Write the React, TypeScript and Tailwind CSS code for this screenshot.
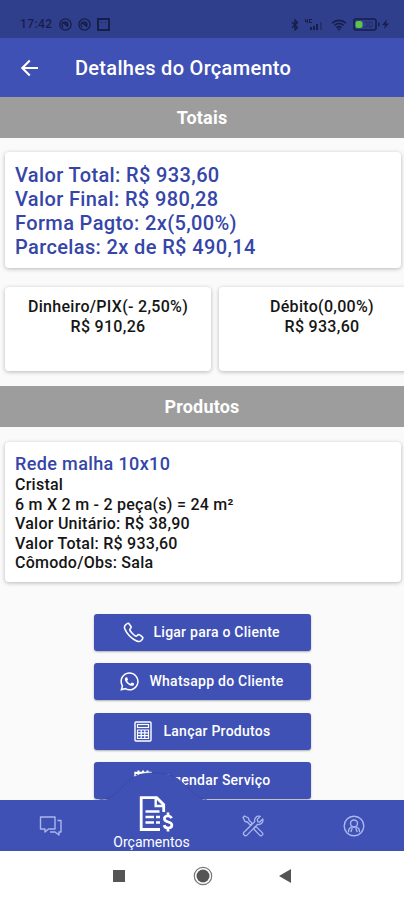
import React from 'react';
import { FaWhatsapp } from 'react-icons/fa';

interface ActionButtonProps {
  label: string;
  icon: React.ReactNode;
  className: string;
}

const summary = [
  'Valor Total: R$ 933,60',
  'Valor Final: R$ 980,28',
  'Forma Pagto: 2x(5,00%)',
  'Parcelas: 2x de R$ 490,14',
];

const productLines = [
  'Cristal',
  '6 m X 2 m - 2 peça(s) = 24 m²',
  'Valor Unitário: R$ 38,90',
  'Valor Total: R$ 933,60',
  'Cômodo/Obs: Sala',
];

const PhoneIcon = () => (
  <svg className="w-[21px] h-[21px]" viewBox="0 0 24 24" fill="none" stroke="currentColor" strokeWidth={1.8} strokeLinejoin="round">
    <path d="M3.2 3.1C4.4 1.8 5.2 1.2 6.1 1.4c.7.2 3.1 3.5 3.3 4.3.3 1.1-1.9 2.3-1.7 3.2.4 1.8 5.3 6.9 7.2 7.3 1 .2 2-2 3.2-1.9.9.1 4.4 2.7 4.6 3.6.2 1-1.5 3.1-2.7 3.9-1 .6-2.7.5-4.5-.2C10 19.4 4.2 13.5 2.1 8.1c-.8-2.1-.5-3.8 1.1-5z" />
  </svg>
);

const CalculatorIcon = () => (
  <svg className="w-[18px] h-[21px]" viewBox="0 0 18 21" fill="none" stroke="currentColor">
    <rect x="1" y="1" width="16" height="19" rx="1" strokeWidth={1.4} />
    <rect x="3.5" y="3.5" width="11" height="3" strokeWidth={1.2} />
    <path d="M3.5 9h11v8.5h-11zM3.5 11.8h11M3.5 14.6h11M7.2 9v8.5M10.8 9v8.5" strokeWidth={1.2} />
  </svg>
);

const CalendarIcon = () => (
  <svg className="w-[18px] h-[21px]" viewBox="0 0 18 21" fill="none" stroke="currentColor" strokeWidth={1.4}>
    <path d="M1 2.5h16V19H1zM1 6h16" />
    <path d="M1 3h16M4.5 .5v5M9 .5v5M13.5 .5v5" strokeWidth={2} />
  </svg>
);

const ChatIcon = () => (
  <svg className="w-[24px] h-[20px]" viewBox="0 0 24 20" fill="none" stroke="currentColor" strokeWidth={1.4} strokeLinejoin="round">
    <path d="M1.5 1h14.5v12H9.500L6 16v-3H1.5z" />
    <path d="M18.5 4.5h3.5V16h-2v3l-4-3h-5" />
  </svg>
);

const BudgetIcon = () => (
  <svg className="w-[36px] h-[36px]" viewBox="0 0 36 36" fill="none" stroke="currentColor">
    <path d="M22 33.5H3.200V1.700h15.500l7 7V16" strokeWidth={2.8} />
    <path d="M17.7 2v8h8" strokeWidth={2.4} />
    <path d="M7.5 15.5h14M7.5 21h8.500M18 21h4M7.5 26.5h8.500M18 26.5h4" strokeWidth={2.5} />
    <path d="M33.5 22.2c-.6-1.6-1.9-2.2-3.600-2.2-2 0-3.500 1-3.500 2.800 0 4.100 7.500 2.200 7.500 6.200 0 1.900-1.700 3-3.800 3-2.100 0-3.600-1-4-2.900M30 16.500V20M30 32v3.500" strokeWidth={2.7} />
  </svg>
);

const ToolsIcon = () => (
  <svg className="w-[22px] h-[22px]" viewBox="0 0 22 22" fill="none" stroke="currentColor" strokeWidth={1.3} strokeLinejoin="round" strokeLinecap="round">
    <path d="M1 2.5 2.5 1l4 2 .5 2.3 3.3 3.2-1.800 1.800-3.200-3.300L3 6.500z" />
    <path d="m12.5 12.2 1.900-.3 5.800 5.700c1.700 1.700-.8 4.200-2.500 2.500L12 14.300z" />
    <path d="m18.3 1.400-3 3 .4 2.200 2.100.4 3-3c.8 3.700-2.100 6.100-5.200 5.300L5 20.100C3.100 21.900.2 19.200 2 17.200L12.800 6.500c-.9-3.100 1.700-6 5.500-5.100z" />
  </svg>
);

const ProfileIcon = () => (
  <svg className="w-[22px] h-[22px]" viewBox="0 0 22 22" fill="none" stroke="currentColor" strokeWidth={1.4} strokeLinecap="round" strokeLinejoin="round">
    <circle cx="11" cy="11" r="9.8" />
    <circle cx="11" cy="8.5" r="3.5" />
    <path d="M5.5 16.8c0-3 1.8-4.5 3.7-4.9h3.6c1.9.4 3.7 1.9 3.7 4.9M8 16.5l1-2.8M14 16.5l-1-2.8" />
  </svg>
);

const BlockedIcon = () => (
  <svg className="w-[13px] h-[13px]" viewBox="0 0 13 13" fill="none" stroke="currentColor" strokeWidth={1.3}>
    <circle cx="6.5" cy="6.5" r="5.6" />
    <path d="M4.2 9.2a3.5 3.5 0 0 1-.2-5L9 9M5.3 4.2c2.5-1 4.5 1 3.5 3.2L6 4.8" />
  </svg>
);

const StatusBar = () => (
  <div className="h-[38px] shrink-0 bg-[#303f8b] text-[#161e4b] flex items-end justify-between pl-5 pr-[14px] pb-[6px]">
    <div className="flex items-center gap-[6px] h-[15px]">
      <span className="text-[12px] leading-[15px] font-medium tracking-[0.4px] w-[33px]">17:42</span>
      <BlockedIcon />
      <BlockedIcon />
      <svg className="w-[13px] h-[13px]" viewBox="0 0 13 13" fill="none" stroke="currentColor">
        <rect x="1" y="1" width="11" height="11" strokeWidth={2} />
        <path d="M4 4.500h1M8 4.500h1" strokeWidth={1} />
      </svg>
    </div>
    <div className="flex items-center h-[15px]">
      <svg className="w-[8px] h-[12px]" viewBox="0 0 8 12" fill="none" stroke="currentColor" strokeWidth={1.4}>
        <path d="m1 3.3 5.5 5.2L4 11V1l2.5 2.5L1 8.7" />
      </svg>
      <svg className="w-[18px] h-[13px] ml-[6px]" viewBox="0 0 18 13" fill="currentColor">
        <path d="M0 1h1v2h1V1h1v4H2V4H0zM4 1h3v1H5v2h2v1H4z" />
        <path d="M5 9h2v3H5zM8 8h2v4H8zM11 6h2v6h-2z" />
        <path d="M15 4h2v8h-2z" opacity=".4" />
      </svg>
      <svg className="w-[16px] h-[12px] ml-[8px]" viewBox="0 0 16 12" fill="none" stroke="currentColor" strokeWidth={1.6}>
        <path d="M1 4.2a10 10 0 0 1 14 0M3.3 6.5a6.7 6.7 0 0 1 9.4 0M5.5 8.7a3.5 3.5 0 0 1 5 0" />
        <path d="m6 9.5 2 2.3 2-2.3z" fill="currentColor" stroke="none" />
      </svg>
      <svg className="w-[37px] h-[13px] ml-[6px]" viewBox="0 0 37 13">
        <rect x="1" y="1" width="22" height="11" rx="2" fill="none" stroke="currentColor" strokeWidth={1.6} />
        <rect x="2.5" y="3" width="7" height="7" rx="2.5" fill="#5fc544" />
        <path d="M11 4h3v5h-3M16 4h3v5h-3z" fill="none" stroke="currentColor" opacity=".5" />
        <path d="M25 4.5h1.5v4H25zM34 1.5 29 7h3l-1 4 5-5.5h-3z" fill="currentColor" />
      </svg>
    </div>
  </div>
);

const SectionHeader = ({ title }: { title: string }) => (
  <div className="h-[41px] shrink-0 bg-[#9d9d9d] flex items-center justify-center text-white text-[18px] font-bold tracking-[0.2px]">
    {title}
  </div>
);

const ActionButton: React.FC<ActionButtonProps> = ({ label, icon, className }) => (
  <button className={`w-[217px] h-[37px] shrink-0 rounded-[3px] bg-[#3f51b5] text-white text-[14px] font-medium tracking-[0.25px] flex items-center shadow-[0_1px_2px_rgba(0,0,0,0.3)] whitespace-nowrap ${className}`}>
    {icon}
    <span>{label}</span>
  </button>
);

const App: React.FC = () => {
  return (
    <div className="w-[404px] h-[900px] overflow-hidden flex flex-col bg-[#fafafa] font-['Roboto','Liberation_Sans',sans-serif]">
      <StatusBar />

      {/* App bar */}
      <header className="h-[59px] shrink-0 bg-[#3f51b5] text-white flex items-center pl-5">
        <svg className="w-[19px] h-[18px]" viewBox="0 0 19 18" fill="none" stroke="currentColor" strokeWidth={2.1}>
          <path d="M18 9H2.5M9.8 1.5 2.3 9l7.5 7.5" />
        </svg>
        <h1 className="ml-[36px] text-[20px] font-medium tracking-[0.3px] whitespace-nowrap">Detalhes do Orçamento</h1>
      </header>

      {/* Content */}
      <main className="h-[703px] shrink-0 overflow-hidden flex flex-col">
        <SectionHeader title="Totais" />

        <section className="mt-[14px] ml-[5px] mr-[3px] h-[116px] shrink-0 rounded-[4px] bg-white shadow-[0_1px_4px_rgba(0,0,0,0.27)] pl-[10px] pt-[11px] text-[#3546a8] text-[20px] leading-[24px] font-medium tracking-[0.37px]">
          {summary.map((line) => (
            <p key={line}>{line}</p>
          ))}
        </section>

        <div className="mt-[19px] pl-[5px] flex gap-2 h-[84px] shrink-0 text-center text-[16px] leading-[19.5px] font-medium tracking-[0.3px] text-[#151515]">
          <div className="w-[206px] shrink-0 rounded-[4px] bg-white shadow-[0_1px_4px_rgba(0,0,0,0.27)] pt-[10px]">
            <p>Dinheiro/PIX(- 2,50%)</p>
            <p>R$ 910,26</p>
          </div>
          <div className="w-[206px] shrink-0 rounded-[4px] bg-white shadow-[0_1px_4px_rgba(0,0,0,0.27)] pt-[10px]">
            <p>Débito(0,00%)</p>
            <p>R$ 933,60</p>
          </div>
        </div>

        <div className="mt-[15px] shrink-0">
          <SectionHeader title="Produtos" />
        </div>

        <section className="mt-[15px] ml-[5px] mr-[3px] h-[140px] shrink-0 rounded-[4px] bg-white shadow-[0_1px_4px_rgba(0,0,0,0.27)] pl-[10px] pt-[11px] text-[16px] leading-[19.6px] font-medium tracking-[0.25px] text-[#151515]">
          <h2 className="text-[18px] leading-[22px] tracking-[0.37px] text-[#3546a8]">Rede malha 10x10</h2>
          {productLines.map((line) => (
            <p key={line}>{line}</p>
          ))}
        </section>

        <div className="mt-8 flex flex-col items-center gap-[12.3px]">
          <ActionButton label="Ligar para o Cliente" icon={<PhoneIcon />} className="pl-[29px] gap-[10px]" />
          <ActionButton label="Whatsapp do Cliente" icon={<FaWhatsapp className="w-[21px] h-[21px]" />} className="pl-[25px] gap-[10px]" />
          <ActionButton label="Lançar Produtos" icon={<CalculatorIcon />} className="pl-[40px] gap-[12px]" />
          <ActionButton label="Agendar Serviço" icon={<CalendarIcon />} className="pl-[40px] gap-[12px]" />
        </div>
      </main>

      {/* Bottom navigation */}
      <nav className="relative h-[51px] shrink-0 bg-[#3f51b5] text-[#aab7ed] grid grid-cols-4">
        <svg className="absolute left-[93px] -top-[29px] w-[118px] h-[30px]" viewBox="0 0 118 30">
          <path d="M6 30C24 28 28 16 38 8 45 3 52 2 60 2s14 0 22 4c12 7 17 20 32 24z" fill="#3f51b5" />
          <path d="M6 29C24 27 28 16 38 8 45 3 52 2 60 2s14 0 22 4c12 7 17 19 32 23" fill="none" stroke="#3546a2" strokeWidth={0.7} />
        </svg>
        <div className="flex items-center justify-center"><ChatIcon /></div>
        <div className="relative flex flex-col items-center -mt-[4px] text-white">
          <div className="ml-[8px]"><BudgetIcon /></div>
          <span className="text-[14px] leading-[18px] mt-[1px]">Orçamentos</span>
        </div>
        <div className="flex items-center justify-center"><ToolsIcon /></div>
        <div className="flex items-center justify-center"><ProfileIcon /></div>
      </nav>

      {/* System buttons */}
      <footer className="h-[49px] bg-white flex items-center pl-[113px] text-[#555]">
        <div className="w-[12px] h-[12px] bg-[#555]" />
        <svg className="w-[20px] h-[20px] ml-[68px]" viewBox="0 0 20 20">
          <circle cx="10" cy="10" r="8.7" fill="none" stroke="#777" strokeWidth={1.2} />
          <circle cx="10" cy="10" r="6.5" fill="currentColor" />
        </svg>
        <svg className="w-[12px] h-[14px] ml-[66px]" viewBox="0 0 12 14" fill="currentColor">
          <path d="M0 7 12 0v14z" />
        </svg>
      </footer>
    </div>
  );
};

export default App;
